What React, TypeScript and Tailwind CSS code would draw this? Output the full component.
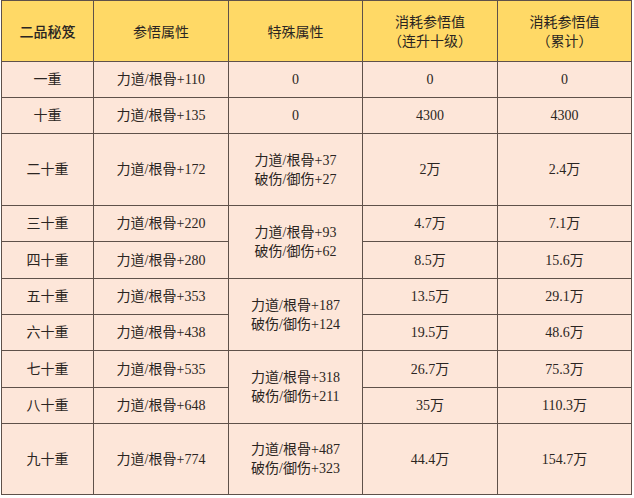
type Row = {
  level: string
  base: string
  special?: { text: string[]; span: number }
  step: string
  total: string
  h: number
}

const rows: Row[] = [
  { level: '一重', base: '力道/根骨+110', special: { text: ['0'], span: 1 }, step: '0', total: '0', h: 36 },
  { level: '十重', base: '力道/根骨+135', special: { text: ['0'], span: 1 }, step: '4300', total: '4300', h: 36 },
  { level: '二十重', base: '力道/根骨+172', special: { text: ['力道/根骨+37', '破伤/御伤+27'], span: 1 }, step: '2万', total: '2.4万', h: 72 },
  { level: '三十重', base: '力道/根骨+220', special: { text: ['力道/根骨+93', '破伤/御伤+62'], span: 2 }, step: '4.7万', total: '7.1万', h: 36 },
  { level: '四十重', base: '力道/根骨+280', step: '8.5万', total: '15.6万', h: 37 },
  { level: '五十重', base: '力道/根骨+353', special: { text: ['力道/根骨+187', '破伤/御伤+124'], span: 2 }, step: '13.5万', total: '29.1万', h: 36 },
  { level: '六十重', base: '力道/根骨+438', step: '19.5万', total: '48.6万', h: 36 },
  { level: '七十重', base: '力道/根骨+535', special: { text: ['力道/根骨+318', '破伤/御伤+211'], span: 2 }, step: '26.7万', total: '75.3万', h: 37 },
  { level: '八十重', base: '力道/根骨+648', step: '35万', total: '110.3万', h: 36 },
  { level: '九十重', base: '力道/根骨+774', special: { text: ['力道/根骨+487', '破伤/御伤+323'], span: 1 }, step: '44.4万', total: '154.7万', h: 71 },
]

const cell = 'border border-[#5f514a] p-0 text-center align-middle'

export default function App() {
  return (
    <div className="h-[498px] w-[634px] bg-white pl-px">
      <table
        className="w-[630px] table-fixed border-collapse text-[14px] text-[#2b2522]"
        style={{ fontFamily: '"Liberation Serif", "Noto Sans CJK SC", serif' }}
      >
        <colgroup>
          <col className="w-[92px]" />
          <col className="w-[135px]" />
          <col className="w-[134px]" />
          <col className="w-[135px]" />
          <col className="w-[134px]" />
        </colgroup>
        <thead>
          <tr
            className="h-[61px] bg-[#ffd966] leading-[19px] text-[#2a2522]"
            style={{ fontFamily: '"Noto Sans CJK SC", sans-serif' }}
          >
            <th className={`${cell} font-medium`}>二品秘笈</th>
            <th className={`${cell} font-normal`}>参悟属性</th>
            <th className={`${cell} font-normal`}>特殊属性</th>
            <th className={`${cell} font-normal`}>
              <div>消耗参悟值</div>
              <div>（连升十级）</div>
            </th>
            <th className={`${cell} font-normal`}>
              <div>消耗参悟值</div>
              <div>（累计）</div>
            </th>
          </tr>
        </thead>
        <tbody className="bg-[#fde6d9]">
          {rows.map((r) => (
            <tr key={r.level} style={{ height: r.h }}>
              <td className={cell}>{r.level}</td>
              <td className={cell}>{r.base}</td>
              {r.special && (
                <td className={`${cell} leading-[19px]`} rowSpan={r.special.span}>
                  {r.special.text.map((t, i) => (
                    <div key={i}>{t}</div>
                  ))}
                </td>
              )}
              <td className={cell}>{r.step}</td>
              <td className={cell}>{r.total}</td>
            </tr>
          ))}
        </tbody>
      </table>
    </div>
  )
}
